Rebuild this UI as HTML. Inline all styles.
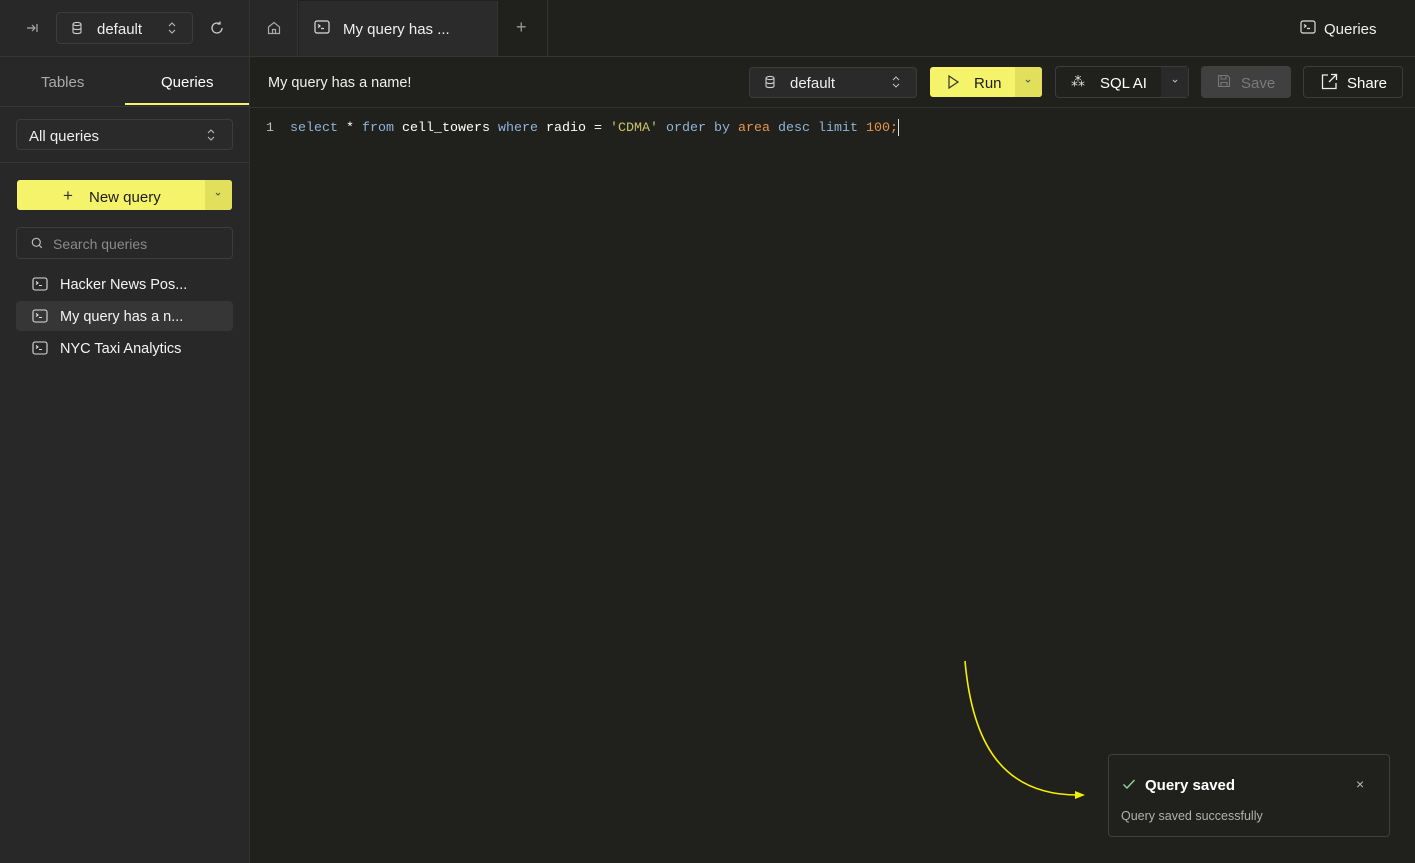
<!DOCTYPE html>
<html><head><style>
*{box-sizing:border-box;margin:0;padding:0}
body{width:1415px;height:863px;background:#20201c;font-family:"Liberation Sans",sans-serif;color:#fff;position:relative;overflow:hidden;font-size:14px}
.abs{position:absolute}
div.abs[style*="font-size"]{margin-top:1px}
.side{left:0;top:0;width:250px;height:863px;background:#282828;border-right:1px solid #343434}
.hl{position:absolute;height:1px;background:#363636}
.box{position:absolute;border:1px solid #3c3c3c;border-radius:4px}
svg{position:absolute}
.mono{font-family:"Liberation Mono",monospace;font-size:13.33px;margin-top:1px}
</style></head><body>
<div class="abs side"></div>
<div class="hl" style="left:0;top:56px;width:1415px"></div>
<div class="abs" style="left:250px;top:0;width:48px;height:56px;background:#282828;border-right:1px solid #343434"></div>
<div class="abs" style="left:299px;top:1px;width:199px;height:55px;background:#2b2b2b;border-right:1px solid #343434"></div>
<div class="abs" style="left:547px;top:0;width:1px;height:56px;background:#343434"></div>
<svg style="left:24px;top:20px" width="16" height="16" viewBox="0 0 16 16" fill="none" stroke="#aaa" stroke-width="1.2"><path d="M3 8h8M8 5l3 3-3 3M13 4v8"/></svg>
<div class="box" style="left:56px;top:12px;width:137px;height:32px;background:#2a2a2a"></div>
<svg style="left:70px;top:21px" width="14" height="14" viewBox="0 0 14 14" fill="none" stroke="#ccc" stroke-width="1.1"><ellipse cx="7" cy="3" rx="4" ry="1.6"/><path d="M3 3v8c0 1 2 1.6 4 1.6s4-.6 4-1.6V3M3 7c0 1 2 1.6 4 1.6s4-.6 4-1.6"/></svg>
<div class="abs" style="left:97px;top:20px;font-size:15px;color:#eee">default</div>
<svg style="left:166px;top:21px" width="12" height="14" viewBox="0 0 12 14" fill="none" stroke="#bbb" stroke-width="1.1"><path d="M3 5l3-3 3 3M3 9l3 3 3-3"/></svg>
<svg style="left:209px;top:20px" width="16" height="16" viewBox="0 0 16 16" fill="none" stroke="#ccc" stroke-width="1.3"><path d="M13 8a5 5 0 1 1-2-4M11 1.5V4h-2.5"/></svg>
<svg style="left:266px;top:20px" width="16" height="16" viewBox="0 0 16 16" fill="none" stroke="#aaa" stroke-width="1.2"><path d="M2.5 7L8 2.5 13.5 7v6.5h-11z M6.5 13.5v-4h3v4"/></svg>
<svg style="left:314px;top:20px" width="16" height="14" viewBox="0 0 16 14" fill="none" stroke="#ddd" stroke-width="1.2"><rect x="1" y="1" width="14" height="12" rx="2"/><path d="M4 4.5l2 1.5-2 1.5M7 8.5h3"/></svg>
<div class="abs" style="left:343px;top:20px;font-size:15px;color:#f0f0f0">My query has ...</div>
<div class="abs" style="left:516px;top:16px;font-size:18px;color:#999">+</div>
<svg style="left:1300px;top:20px" width="16" height="14" viewBox="0 0 16 14" fill="none" stroke="#ddd" stroke-width="1.2"><rect x="1" y="1" width="14" height="12" rx="2"/><path d="M4 4.5l2 1.5-2 1.5M7 8.5h3"/></svg>
<div class="abs" style="left:1324px;top:20px;font-size:15px;color:#f0f0f0">Queries</div>
<div class="abs" style="left:41px;top:73px;font-size:15px;color:#aaa">Tables</div>
<div class="abs" style="left:161px;top:73px;font-size:15px;color:#fff">Queries</div>
<div class="abs" style="left:125px;top:103px;width:124px;height:2px;background:#f5f36a"></div>
<div class="hl" style="left:0;top:106px;width:250px"></div>
<div class="box" style="left:16px;top:119px;width:217px;height:31px;background:#2a2a2a"></div>
<div class="abs" style="left:29px;top:127px;font-size:15px;color:#eee">All queries</div>
<svg style="left:205px;top:128px" width="12" height="14" viewBox="0 0 12 14" fill="none" stroke="#bbb" stroke-width="1.1"><path d="M3 5l3-3 3 3M3 9l3 3 3-3"/></svg>
<div class="hl" style="left:0;top:162px;width:250px"></div>
<div class="abs" style="left:17px;top:180px;width:215px;height:30px;background:#f5f36a;border-radius:3px"></div>
<div class="abs" style="left:205px;top:180px;width:27px;height:30px;background:#e1df5c;border-radius:0 3px 3px 0"></div>
<div class="abs" style="left:63px;top:185px;font-size:17px;color:#333">+</div>
<div class="abs" style="left:89px;top:188px;font-size:15px;color:#1c1c1c">New query</div>
<svg style="left:214px;top:191px" width="8" height="6" viewBox="0 0 8 6" fill="none" stroke="#555" stroke-width="1"><path d="M2 2l2 2 2-2"/></svg>
<div class="box" style="left:16px;top:227px;width:217px;height:32px;background:#282828"></div>
<svg style="left:31px;top:237px" width="12" height="12" viewBox="0 0 12 12" fill="none" stroke="#bbb" stroke-width="1.2"><circle cx="5.3" cy="5.3" r="4"/><path d="M8.3 8.3l2.5 2.5"/></svg>
<div class="abs" style="left:53px;top:235px;font-size:14px;color:#8a8a8a">Search queries</div>
<div class="abs" style="left:16px;top:301px;width:217px;height:30px;background:#363636;border-radius:4px"></div>
<svg style="left:32px;top:277px" width="16" height="14" viewBox="0 0 16 14" fill="none" stroke="#ddd" stroke-width="1.1"><rect x="1" y="1" width="14" height="12" rx="2"/><path d="M4 4.5l2 1.5-2 1.5M7 8.5h3"/></svg>
<svg style="left:32px;top:309px" width="16" height="14" viewBox="0 0 16 14" fill="none" stroke="#ddd" stroke-width="1.1"><rect x="1" y="1" width="14" height="12" rx="2"/><path d="M4 4.5l2 1.5-2 1.5M7 8.5h3"/></svg>
<svg style="left:32px;top:341px" width="16" height="14" viewBox="0 0 16 14" fill="none" stroke="#ddd" stroke-width="1.1"><rect x="1" y="1" width="14" height="12" rx="2"/><path d="M4 4.5l2 1.5-2 1.5M7 8.5h3"/></svg>
<div class="abs" style="left:60px;top:276px;font-size:14.5px;color:#f4f4f4">Hacker News Pos...</div>
<div class="abs" style="left:60px;top:308px;font-size:14.5px;color:#f4f4f4">My query has a n...</div>
<div class="abs" style="left:60px;top:340px;font-size:14.5px;color:#f4f4f4">NYC Taxi Analytics</div>
<div class="abs" style="left:268px;top:74px;font-size:14.5px;color:#f0f0f0">My query has a name!</div>
<div class="hl" style="left:250px;top:107px;width:1165px;background:#333"></div>
<div class="box" style="left:749px;top:67px;width:168px;height:31px;background:#2a2a2a"></div>
<svg style="left:763px;top:75px" width="14" height="14" viewBox="0 0 14 14" fill="none" stroke="#ccc" stroke-width="1.1"><ellipse cx="7" cy="3" rx="4" ry="1.6"/><path d="M3 3v8c0 1 2 1.6 4 1.6s4-.6 4-1.6V3M3 7c0 1 2 1.6 4 1.6s4-.6 4-1.6"/></svg>
<div class="abs" style="left:790px;top:74px;font-size:15px;color:#eee">default</div>
<svg style="left:890px;top:75px" width="12" height="14" viewBox="0 0 12 14" fill="none" stroke="#bbb" stroke-width="1.1"><path d="M3 5l3-3 3 3M3 9l3 3 3-3"/></svg>
<div class="abs" style="left:930px;top:67px;width:112px;height:30px;background:#f5f36a;border-radius:3px"></div>
<div class="abs" style="left:1015px;top:67px;width:27px;height:30px;background:#e1df5c;border-radius:0 3px 3px 0"></div>
<svg style="left:946px;top:74px" width="14" height="16" viewBox="0 0 14 16" fill="none" stroke="#333" stroke-width="1.2"><path d="M3 2l9 6-9 6z"/></svg>
<div class="abs" style="left:974px;top:74px;font-size:15px;color:#1c1c1c">Run</div>
<svg style="left:1024px;top:78px" width="8" height="6" viewBox="0 0 8 6" fill="none" stroke="#555" stroke-width="1"><path d="M2 2l2 2 2-2"/></svg>
<div class="box" style="left:1055px;top:66px;width:134px;height:32px;background:#20201c"></div>
<div class="abs" style="left:1161px;top:67px;width:27px;height:30px;background:#2a2a2a"></div>
<div class="abs" style="left:1071px;top:72px;font-size:14px;color:#ddd">⁂</div>
<div class="abs" style="left:1100px;top:74px;font-size:15px;color:#fff">SQL AI</div>
<svg style="left:1171px;top:78px" width="8" height="6" viewBox="0 0 8 6" fill="none" stroke="#bbb" stroke-width="1"><path d="M2 2l2 2 2-2"/></svg>
<div class="abs" style="left:1201px;top:66px;width:90px;height:32px;background:#404040;border-radius:4px"></div>
<svg style="left:1217px;top:74px" width="14" height="14" viewBox="0 0 14 14" fill="none" stroke="#777" stroke-width="1.1"><path d="M1.5 1.5h9l2 2v9h-11z M4 1.5v3.5h5V1.5 M4 12.5V8.5h6v4"/></svg>
<div class="abs" style="left:1241px;top:74px;font-size:15px;color:#7a7a7a">Save</div>
<div class="box" style="left:1303px;top:66px;width:100px;height:32px"></div>
<svg style="left:1321px;top:73px" width="17" height="17" viewBox="0 0 17 17" fill="none" stroke="#eee" stroke-width="1.3"><path d="M7 2H1.5v13.5H15V10M10 1.5h5.5V7M15.5 1.5L8 9"/></svg>
<div class="abs" style="left:1347px;top:74px;font-size:15px;color:#fff">Share</div>
<div class="abs mono" style="left:266px;top:120px;color:#bbb">1</div>
<div class="abs mono" style="left:290px;top:120px;color:#fff;white-space:pre"><span style="color:#8fb3d9">select</span> * <span style="color:#8fb3d9">from</span> cell_towers <span style="color:#8fb3d9">where</span> radio = <span style="color:#c9c46a">'CDMA'</span> <span style="color:#8fb3d9">order by</span> <span style="color:#e8954a">area</span> <span style="color:#8fb3d9">desc limit</span> <span style="color:#e8954a">100</span><span style="color:#e8954a">;</span></div>
<div class="abs" style="left:898px;top:119px;width:1px;height:17px;background:#ddd"></div>
<svg style="left:950px;top:650px" width="150" height="160" viewBox="0 0 150 160" fill="none"><path d="M15 11 C 22 90, 50 145, 128 145" stroke="#f5f000" stroke-width="1.6"/><path d="M125 141 L135 145 L125 149z" fill="#f5f000"/></svg>
<div class="abs" style="left:1108px;top:754px;width:282px;height:83px;border:1px solid #3e3e3e;border-radius:4px;background:#20201c"></div>
<svg style="left:1122px;top:778px" width="14" height="12" viewBox="0 0 14 12" fill="none" stroke="#8fd9a0" stroke-width="1.4"><path d="M1.5 6.5l3.5 3.5 7.5-8"/></svg>
<div class="abs" style="left:1145px;top:776px;font-size:15px;font-weight:bold;color:#fff">Query saved</div>
<div class="abs" style="left:1356px;top:775px;font-size:14px;color:#bbb">×</div>
<div class="abs" style="left:1121px;top:808px;font-size:12.5px;color:#b0b0b0">Query saved successfully</div>
</body></html>
